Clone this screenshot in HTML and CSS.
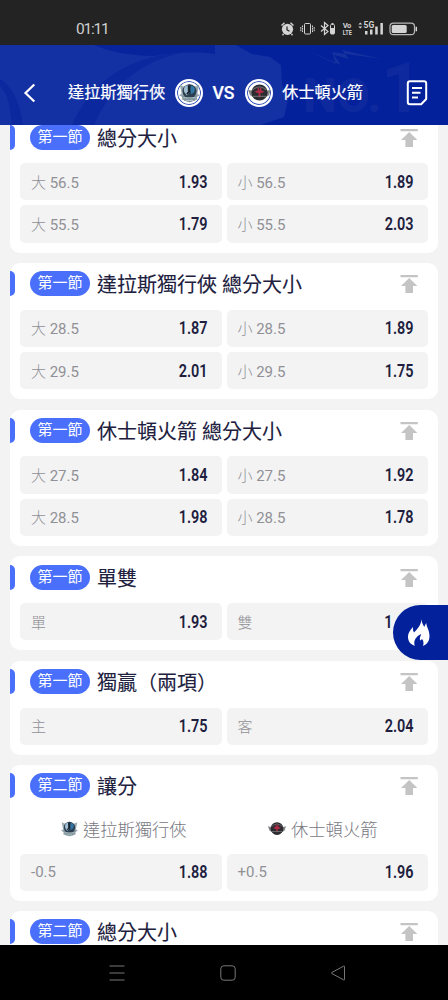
FILE: index.html
```html
<!DOCTYPE html>
<html lang="zh-Hant">
<head>
<meta charset="utf-8">
<title>達拉斯獨行俠 VS 休士頓火箭</title>
<link rel="stylesheet" href="styles.css">
</head>
<body>
<svg class="defs" width="0" height="0">
  <symbol id="top" viewBox="0 0 18 18"><path d="M.5 0h17.300v2.200H.5zM9.200 3l8.200 8h-4.400V18H5.400v-7H1z" fill="#c4c4c4"/></symbol>
  <symbol id="mavs" viewBox="0 0 24 24">
    <path d="M1 3l6 3 5-4 5 4 6-3-2 10 3 2-4 2 1 3-9 3-9-3 1-3-4-2 3-2z" fill="#9aa8b0"/>
    <path d="M3 16l4-2h10l4 2-3 5-6 2-6-2z" fill="#7d929a"/>
    <circle cx="12" cy="10.500" r="8" fill="#2b3f50"/>
    <path d="M10 3.500c-4 1-5 4-4 8l3 4 2-2-1-4z" fill="#a3bfd2"/>
    <path d="M14 4c4 1 5 4 3 8l-3 2-1-5z" fill="#3277a4"/>
    <path d="M11 4l1 6-3 4" stroke="#14202c" stroke-width="1.800" fill="none"/>
    <path d="M5 18h14M8 21h8" stroke="#c4d0d4" stroke-width="1"/>
  </symbol>
  <symbol id="rockets" viewBox="0 0 24 20">
    <path d="M0 7l4 1h16l4-1-2 6-4 2H6l-4-2z" fill="#85868a"/>
    <circle cx="12" cy="10" r="8.500" fill="#2b2c2f"/>
    <path d="M4.500 7.500q7.500-7 15 0" fill="none" stroke="#66686d" stroke-width="1.300"/>
    <path d="M10 5h1.500v2h1V5H14v3l3.500 1-3 1.600H13V15h-2v-4.400H9.500l-3-1.600L10 8z" fill="#ad2b46"/>
    <path d="M5 14h14" stroke="#77797d"/>
  </symbol>
</svg>
<div class="phone">
  <div class="status">
    <span class="clock">01:11</span>
    <svg class="status-icons" width="140" height="18" viewBox="280 20 140 18">
      <g fill="none" stroke="#d4d4d4">
        <circle cx="287.500" cy="29.300" r="5.600" fill="#d4d4d4" stroke="none"/>
        <path d="M281.500 25.500l3-2.700M293.500 25.500l-3-2.700M283.500 34l-1 1.300M291.500 34l1 1.300" stroke-width="1.400"/>
        <path d="M287 26.500v3.300l2.500 1.400" stroke="#232323" stroke-width="1.200"/>
        <rect x="304.500" y="23.500" width="6" height="10.500" rx="1"/>
        <path d="M302.500 25.500v7M300.800 27v4.500M312.500 25.500v7M314.200 27v4.500" stroke-dasharray="1.800 .6"/>
        <path d="M321 25.500l7 6-3.500 3V22.500l3.500 3-7 6" stroke-width="1.200"/>
        <rect x="330.500" y="24.500" width="4" height="9.500" rx="1"/>
        <rect x="331" y="28" width="3" height="6" fill="#d4d4d4" stroke="none"/>
        <path d="M331.500 23.500h2"/>
        <rect x="390" y="23.200" width="24.500" height="11.500" rx="3.500" stroke-width="1.200" stroke="#b8b8b8"/>
        <path d="M416.300 26.800v4.500" stroke-width="1.500"/>
      </g>
      <g fill="#d4d4d4">
        <rect x="391.700" y="25" width="15" height="8" rx="1.500"/>
        <path d="M358.300 24.500l2-2 2 2zM358.300 26.500l2 2 2-2z"/>
        <path d="M365 31h2.500v3.500H365zM370 29.500h2.500v5H370zM375.200 26.500h2.500v8h-2.500zM380.400 23h2.500v11.500h-2.500z"/>
        <text x="342.800" y="27.800" class="tiny" textLength="8.500">Vo</text>
        <text x="342.800" y="34.800" class="tiny" textLength="9" lengthAdjust="spacingAndGlyphs">LTE</text>
        <text x="363.500" y="28" class="tiny g5">5G</text>
      </g>
    </svg>
  </div>
  <header class="header">
    <svg class="header-bg" width="448" height="80" viewBox="0 45 448 80">
      <path d="M0 45H236l16 9 18 3 11 8 1 20 6 15-4 17-23 8H0z" fill="#1431a4"/>
      <path d="M94 45h121v9c-25-3-43-1-61 2-22 0-44-4-60-11z" fill="#08249c"/>
      <path d="M180 53C145 61 112 83 94 125H72C91 83 125 57 180 53z" fill="#0b289f"/>
      <path d="M0 79c12 7 20 23 23 46H12C10 105 7 92 0 86z" fill="#0b289f"/>
      <path d="M304 49l32 15-4-12 50 7-40-9 7 9-15-4 7 10z" fill="#15319f"/>
      <text x="303" y="112" class="no1">NO.<tspan class="one">1</tspan></text>
    </svg>
    <div class="bar">
      <svg class="back" width="14" height="20" viewBox="0 0 14 20"><path d="M11.300 1.500L2.500 10l8.800 8.500" fill="none" stroke="#fff" stroke-width="2.200"/></svg>
      <div class="match">
        <span>達拉斯獨行俠</span>
        <span class="logo"><svg width="21" height="21"><use href="#mavs"/></svg></span>
        <b class="vs">VS</b>
        <span class="logo"><svg width="23" height="19"><use href="#rockets"/></svg></span>
        <span>休士頓火箭</span>
      </div>
      <svg class="doc" width="22" height="26" viewBox="0 0 22 26"><path d="M4 1.300h14q2.200 0 2.200 2.200v15.500l-5 5.200H4q-2.200 0-2.200-2.200V3.500Q1.800 1.300 4 1.300z" fill="none" stroke="#fff" stroke-width="2"/><path d="M6 8h10M6 12.800h8.500M6 17.500h6" stroke="#fff" stroke-width="1.900"/></svg>
    </div>
  </header>
  <main class="content">
    <section class="card">
      <div class="head"><i></i><span class="badge">第一節</span><h2>總分大小</h2><svg class="up"><use href="#top"/></svg></div>
      <div class="grid">
        <div class="cell"><span>大 <em>56.5</em></span><b>1.93</b></div><div class="cell"><span>小 <em>56.5</em></span><b>1.89</b></div>
        <div class="cell"><span>大 <em>55.5</em></span><b>1.79</b></div><div class="cell"><span>小 <em>55.5</em></span><b>2.03</b></div>
      </div>
    </section>
    <section class="card">
      <div class="head"><i></i><span class="badge">第一節</span><h2>達拉斯獨行俠 總分大小</h2><svg class="up"><use href="#top"/></svg></div>
      <div class="grid">
        <div class="cell"><span>大 <em>28.5</em></span><b>1.87</b></div><div class="cell"><span>小 <em>28.5</em></span><b>1.89</b></div>
        <div class="cell"><span>大 <em>29.5</em></span><b>2.01</b></div><div class="cell"><span>小 <em>29.5</em></span><b>1.75</b></div>
      </div>
    </section>
    <section class="card">
      <div class="head"><i></i><span class="badge">第一節</span><h2>休士頓火箭 總分大小</h2><svg class="up"><use href="#top"/></svg></div>
      <div class="grid">
        <div class="cell"><span>大 <em>27.5</em></span><b>1.84</b></div><div class="cell"><span>小 <em>27.5</em></span><b>1.92</b></div>
        <div class="cell"><span>大 <em>28.5</em></span><b>1.98</b></div><div class="cell"><span>小 <em>28.5</em></span><b>1.78</b></div>
      </div>
    </section>
    <section class="card">
      <div class="head"><i></i><span class="badge">第一節</span><h2>單雙</h2><svg class="up"><use href="#top"/></svg></div>
      <div class="grid">
        <div class="cell"><span>單</span><b>1.93</b></div><div class="cell"><span>雙</span><b class="covered">1</b></div>
      </div>
    </section>
    <section class="card">
      <div class="head"><i></i><span class="badge">第一節</span><h2>獨贏（兩項）</h2><svg class="up"><use href="#top"/></svg></div>
      <div class="grid">
        <div class="cell"><span>主</span><b>1.75</b></div><div class="cell"><span>客</span><b>2.04</b></div>
      </div>
    </section>
    <section class="card">
      <div class="head"><i></i><span class="badge">第二節</span><h2>讓分</h2><svg class="up"><use href="#top"/></svg></div>
      <div class="teams">
        <div><svg width="17" height="17"><use href="#mavs"/></svg>達拉斯獨行俠</div>
        <div class="away"><svg width="18" height="15"><use href="#rockets"/></svg>休士頓火箭</div>
      </div>
      <div class="grid">
        <div class="cell"><span><em>-0.5</em></span><b>1.88</b></div><div class="cell"><span><em>+0.5</em></span><b>1.96</b></div>
      </div>
    </section>
    <section class="card">
      <div class="head"><i></i><span class="badge">第二節</span><h2>總分大小</h2><svg class="up"><use href="#top"/></svg></div>
    </section>
  </main>
  <nav class="nav">
    <svg width="16" height="16" viewBox="0 0 16 16"><path d="M.5 1h15M.5 8h15M.5 15h15"/></svg>
    <svg width="16" height="16" viewBox="0 0 16 16"><rect x=".8" y=".8" width="14.400" height="14.400" rx="3"/></svg>
    <svg width="16" height="16" viewBox="0 0 16 16"><path d="M14.500 1.500v13q0 .8-.8.400L1.800 8.500q-.8-.5 0-1L13.700 1.100q.8-.4.800.4z"/></svg>
  </nav>
  <button class="fab"><svg width="22" height="28" viewBox="0 0 22 28"><path d="M13.300 0c.5 4 1.700 5.500 3 8 .4-1.500 1-2.700 2-4 .1 4 3.200 7 3.200 13 0 5-2.500 8.300-6.500 10 1-2.700.5-5.500-1-7-.8 1.200-1.500 1.500-2 1.300-.5-2 .3-4 1.300-6.300-4 1.700-7 5-7 9 0 1.400.2 2.200.7 3C2.800 25.500 0 22.500 0 18c0-4.500 2.500-7 5-10-.2 2.500.1 4 1 5.500C10 9.500 13.500 5 13.300 0z" fill="#fff"/></svg></button>
</div>
</body>
</html>
```
FILE: styles.css
```css
* { box-sizing: border-box; }
body { margin: 0; font-family: Roboto, "Noto Sans CJK TC", sans-serif; }
.defs { position: absolute; }
.phone { position: relative; width: 448px; height: 1000px; display: flex; flex-direction: column; overflow: hidden; background: #f3f3f3; }
.status { height: 45px; flex: none; background: #232323; display: flex; justify-content: space-between; padding: 20px 28px 0 76px; color: #d0d0d0; }
.clock { font-size: 15.500px; line-height: 18px; letter-spacing: -1.2px; }
.tiny { font: bold 7.500px Roboto, sans-serif; }
.g5 { font-size: 8.500px; }
.header { position: relative; height: 80px; flex: none; background: #03219b; color: #fff; }
.header-bg { position: absolute; inset: 0; }
.no1 { fill: #0d299d; font-family: Roboto, sans-serif; font-weight: 800; font-size: 48px; }
.one { font-size: 70px; }
.bar { position: relative; display: flex; align-items: center; height: 80px; padding: 15px 20px 0 23px; }
.match { display: flex; align-items: center; margin-left: 31px; font-size: 16.200px; font-weight: 400; white-space: nowrap; line-height: 24px; -webkit-text-stroke: .2px #fff; }
.match > span { padding-top: 1px; }
.match > .logo { width: 28px; height: 28px; margin: 0 9px 0 10px; padding: 0; border: 2px solid #fff; border-radius: 50%; background: #fff; box-shadow: inset 0 0 0 1px #3452b8; display: flex; align-items: center; justify-content: center; }
.vs { font-size: 19px; font-weight: 500; width: 23px; display: flex; justify-content: center; transform: scaleX(.93); }
.doc { margin-left: auto; }
.content { flex: 1; min-height: 0; overflow: hidden; padding: 0 10px; }
.card { background: #fff; border-radius: 10px; margin-bottom: 10.300px; padding-bottom: 10px; }
.card:first-child { margin-top: -8.700px; }
.head { height: 46.800px; display: flex; align-items: flex-start; padding: 8.200px 20px 0 0; }
.head i { width: 5px; height: 25px; border-radius: 0 5px 5px 0; background: #4a6ffb; }
.badge { width: 60px; height: 25px; margin: 0 7px 0 15px; border-radius: 13px; background: #4a6ffb; color: #fff; font-size: 15px; line-height: 25px; font-weight: 400; text-align: center; flex: none; }
h2 { margin: 0; font-size: 20px; line-height: 28px; font-weight: 400; color: #20203e; -webkit-text-stroke: .1px #20203e; white-space: nowrap; }
.up { width: 18px; height: 18px; margin: 4px 0 0 auto; flex: none; }
.grid { display: grid; grid-template-columns: 1fr 1fr; gap: 5px; padding: 0 10px; }
.cell { height: 37.300px; border-radius: 5px; background: #f3f3f3; display: flex; align-items: center; justify-content: space-between; padding: 0 14px 1px 11px; }
.cell span { font-size: 15px; color: #909096; font-weight: 300; }
.cell em { font-style: normal; font-weight: 400; }
.cell b { font-size: 18.300px; font-weight: 600; color: #20203e; transform: scaleX(.79); transform-origin: right; }
.cell .covered { margin-right: 22px; }
.teams { height: 41.600px; display: grid; grid-template-columns: 1fr 1fr; gap: 5px; padding: 0 10px 8px; font-size: 17.300px; font-weight: 300; color: #77777f; }
.teams div { display: flex; align-items: center; justify-content: center; gap: 5px; padding-left: 6px; }
.teams .away { padding: 0 9px 0 0; }
.nav { height: 55px; flex: none; background: #000; display: flex; justify-content: space-between; padding: 20px 102px 0 109px; }
.nav svg { fill: none; stroke: #777; stroke-width: 1; }
.fab { position: absolute; right: 0; top: 605px; width: 55px; height: 55px; border: 0; border-radius: 28px 0 0 28px; background: #03219b; padding: 0 0 0 15px; display: flex; align-items: center; }
```
